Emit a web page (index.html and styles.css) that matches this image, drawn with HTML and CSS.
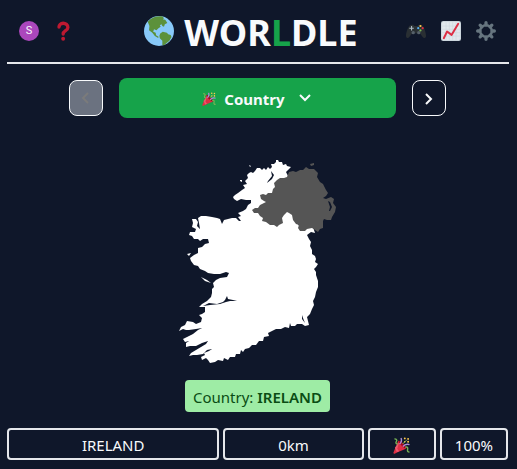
FILE: index.html
```
<!DOCTYPE html>
<html lang="en">
<head>
<meta charset="utf-8">
<meta name="viewport" content="width=device-width, initial-scale=1">
<title>Worldle</title>
<link rel="stylesheet" href="styles.css">
</head>
<body>
<svg class="defs" aria-hidden="true">
  <symbol id="party" viewBox="0 0 36 36">
    <path fill="#dd2e44" d="M11.6 7.6C9 14 4 25 1 33c-.7 2 .8 3 2.500 2.300C11 32 21 27.500 28.500 24.500z"/>
    <path fill="#ea596e" d="M13 11 9 25l4 5-5 2-4-9z"/>
    <ellipse cx="20" cy="16" rx="3" ry="11" transform="rotate(-45 20 16)" fill="#a0041e"/>
    <path d="M14 15c4-4 5-8 3-13M21 20c4-5 8-6 14-4" fill="none" stroke="#aa8dd8" stroke-width="3"/>
    <path d="M3 4c5 0 6 3 4 6s0 5 3 5M26 22c4-2 6 0 5 4s0 6 4 6" fill="none" stroke="#77b255" stroke-width="3"/>
    <path d="M20 14c6-1 4-6 9-7" fill="none" stroke="#77b255" stroke-width="2"/>
    <g fill="#ffcc4d"><circle cx="25" cy="3" r="2"/><circle cx="32" cy="4" r="2"/><circle cx="32" cy="10" r="2"/><circle cx="25" cy="10" r="1.500"/></g>
  </symbol>
</svg>
<div class="page">
  <header class="header">
    <nav class="side">
      <button class="icon-button avatar" aria-label="Account">S</button>
      <button class="icon-button" aria-label="Help">
        <svg class="icon" viewBox="0 0 36 36"><path d="M9 11C9 7 12 4 16.500 4S25 7 25 11.500c0 6-8.500 6-8.500 12" fill="none" stroke="#be1931" stroke-width="6" stroke-linecap="round"/><circle cx="16.500" cy="32" r="3.500" fill="#be1931"/></svg>
      </button>
    </nav>
    <h1 class="title">
      <svg class="globe" viewBox="0 0 36 36" aria-hidden="true"><circle cx="18" cy="18" r="18" fill="#88c9f9"/><path fill="#5c913b" d="M4.500 7C9 1.500 17-.5 22.500.8l1.500 2-1.500 1 3 .7 2.500 4-3 1.500-1 3-2-1-1-2-2 1 1 2-3 2-2 2-3-1-1 3 3 1 .5 3 3 2-.5 1.500-4-2.500-3-4-4-3L6.500 12z"/><path fill="#5c913b" d="m19.500 21 3-2 5 1 1.500 2 3 .7 1 2.500-2.500 4.500-3 2.500-3.500 3-2-.5 0-5-3-3-.5-3z"/></svg>
      <span class="wordmark">WOR<span class="accent">L</span>DLE</span>
    </h1>
    <nav class="side">
      <button class="icon-button" aria-label="Games">
        <svg class="icon" viewBox="0 0 36 36"><path fill="#292f33" d="M7 8c3-2 7-1 8 1h6c1-2 5-3 8-1 4 3 7 13 7 19 0 4-4 5-6 2l-5-7H11l-5 7c-2 3-6 2-6-2C0 21 3 11 7 8z"/><g fill="#55606a"><circle cx="13" cy="21" r="3"/><circle cx="23" cy="21" r="3"/></g><path stroke="#aab8c2" stroke-width="2" d="M10 9v8M6 13h8"/><circle cx="26" cy="9" r="2" fill="#ffcc4d"/><circle cx="30" cy="13" r="2" fill="#dd2e44"/><circle cx="26" cy="17" r="2" fill="#77b255"/><circle cx="22" cy="13" r="2" fill="#55acee"/></svg>
      </button>
      <button class="icon-button" aria-label="Statistics">
        <svg class="icon" viewBox="0 0 36 36"><rect width="36" height="36" rx="4" fill="#ccd6dd"/><rect x="2" y="2" width="32" height="32" rx="2" fill="#e1e8ed"/><path d="M9 2v32M15 2v32M21 2v32M27 2v32M2 9h32M2 15h32M2 21h32M2 27h32" stroke="#ccd6dd" stroke-width="1"/><path d="m5 31 6-12 8 6L31 5" fill="none" stroke="#dd2e44" stroke-width="3.500" stroke-linecap="round" stroke-linejoin="round"/></svg>
      </button>
      <button class="icon-button" aria-label="Settings">
        <svg class="icon" viewBox="0 0 36 36"><g stroke="#66757f" stroke-width="6" stroke-linecap="round"><path d="M18 3v4M18 29v4M3 18h4M29 18h4M7.500 7.500l3 3M25.500 25.500l3 3M7.500 28.500l3-3M25.500 10.500l3-3"/></g><circle cx="18" cy="18" r="10.500" fill="none" stroke="#66757f" stroke-width="4.500"/></svg>
      </button>
    </nav>
  </header>

  <main class="main">
    <div class="rounds">
      <button class="step" disabled aria-label="Previous round"><svg class="chevron" viewBox="0 0 16 16"><path d="M10 3 5 8l5 5"/></svg></button>
      <button class="current"><svg class="party" aria-hidden="true"><use href="#party"/></svg><span>Country</span><svg class="chevron down" viewBox="0 0 16 16" aria-hidden="true"><path d="m3 4 5 5 5-5"/></svg></button>
      <button class="step" aria-label="Next round"><svg class="chevron" viewBox="0 0 16 16"><path d="m5 4 5 5-5 5"/></svg></button>
    </div>

    <svg class="map" viewBox="178 158 162 208" role="img" aria-label="Map of Ireland">
      <path fill="#fff" d="M250 173L252 172 254 173 256 171 258 168 261 168 263 170 265 168 267 170 269 167 271 169 273 167 272 164 275 164 277 162 277 160 279 160 280 162 283 162 284 165 287 164 288 166 292 167 289 170 287 172 289 176 286 190 286 207 291 209 300 226 308 226 314 227 316 233 312 232 308 235 310 239 312 242 311 246 313 250 313 254 316 256 317 259 316 262 319 264 317 267 315 269 317 272 317 275 319 281 319 287 317 292 316 297 314 301 315 305 313 309 311 314 308 317 309 321 310 325 306 326 303 324 298 324 296 326 292 326 291 323 290 328 286 327 282 329 277 329 273 331 269 333 270 336 265 337 264 341 260 341 257 345 253 345 250 348 246 349 244 352 242 350 241 354 237 354 236 357 231 357 229 360 225 358 224 361 219 360 216 362 211 363 209 360 207 358 203 360 202 357 206 355 205 353 210 351 213 349 208 350 204 354 198 355 194 355 190 356 192 353 197 350 202 347 207 344 209 341 203 343 197 346 191 346 187 347 187 343 190 341 186 342 184 339 188 337 194 334 199 330 203 328 197 329 190 330 187 330 184 329 180 331 182 327 186 325 188 321 194 322 197 324 202 322 203 318 200 315 203 314 206 312 206 307 200 307 203 304 208 301 212 297 213 293 213 289 215 287 214 283 217 280 221 278 228 277 230 273 227 272 221 274 215 274 209 273 206 271 201 269 199 266 195 265 192 261 191 258 195 255 199 253 199 248 203 247 206 244 210 243 209 239 204 239 201 241 199 239 195 239 193 236 190 235 191 232 196 232 197 229 193 227 194 223 193 219 197 219 199 222 198 226 201 229 200 223 199 218 202 216 207 216 213 217 218 218 221 219 223 224 225 220 229 219 233 218 237 218 240 221 242 221 239 217 242 216 239 213 244 211 247 209 249 205 252 203 252 200 247 200 242 199 238 201 235 199 234 197 236 195 239 193 243 190 246 188 244 185 248 184 246 181 249 178 248 175z"/>
      <path fill="#555" d="M253 210L256 208 259 208 261 205 267 202 265 201 262 199 261 195 264 194 267 195 269 193 273 193 274 189 276 187 275 183 278 180 281 178 285 178 288 177 290 172 294 171 297 172 301 170 304 170 307 167 310 169 315 169 319 173 318 177 321 182 324 184 327 190 329 193 327 196 324 198 327 199 332 197 335 199 334 203 337 207 336 212 333 217 332 220 328 220 325 219 324 221 324 228 321 229 319 232 313 228 308 229 306 231 301 231 299 228 300 225 297 224 294 220 293 215 290 213 288 212 285 215 283 218 284 223 280 225 278 227 275 225 271 225 267 222 263 221 264 218 261 216 259 213 255 213z"/>
      <path fill="#0f172a" d="M329 201L331 202 333 207 331 211 330 211 331 207zM204 306L210 303 218 304 224 302 226 300 228 296 229 299 234 300 238 301 231 301 227 302 221 304 211 305zM269 181L273 176 272 171 275 175 273 179 268 183zM303 315L303 319 306 323 304 318z"/>
      <path fill="#fff" d="M202 277L208 280 212 283 206 281zM188 254L192 253 190 256zM241 180L243 180 243 182 241 181z"/>
      <path fill="#555" d="M311 164L315 163 315 165 312 166z"/>
      <path fill="#fff" d="M250 165L252 166 251 167z"/>
    </svg>

    <p class="answer">Country: <strong>IRELAND</strong></p>

    <div class="guess">
      <span class="cell name">IRELAND</span>
      <span class="cell distance">0km</span>
      <span class="cell"><svg class="party large" role="img" aria-label="Correct"><use href="#party"/></svg></span>
      <span class="cell">100%</span>
    </div>
  </main>
</div>
</body>
</html>
```
FILE: styles.css
```
* {
  box-sizing: border-box;
}

body {
  margin: 0;
  background: #0f172a;
  color: #f8fafc;
  font: 15px/24px "Noto Sans", "Open Sans", sans-serif;
}

button {
  padding: 0;
  border: 0;
  background: none;
  color: inherit;
  font: inherit;
}

.defs {
  display: none;
}

.page {
  padding: 0 8px 8px 7px;
}

.header {
  display: flex;
  align-items: center;
  justify-content: space-between;
  height: 64px;
  border-bottom: 2px solid #e5e7eb;
}

.side {
  display: flex;
  gap: 15px;
  padding: 0 12px;
}

.side:last-child {
  padding-right: 13px;
}

.icon-button {
  display: grid;
  place-items: center;
  width: 20px;
  height: 20px;
}

.icon {
  width: 20px;
  height: 20px;
}

.avatar {
  border-radius: 50%;
  background: #ab47bc;
  font: 11px/20px Roboto, sans-serif;
}

.title {
  display: flex;
  align-items: center;
  gap: 10px;
  margin: 0;
  padding-left: 22px;
  font-size: 36px;
  line-height: 40px;
  font-weight: 700;
}

.wordmark {
  padding-top: 4px;
}

.globe {
  width: 30px;
  height: 30px;
}

.accent {
  color: #16a34a;
}

.main {
  display: flex;
  flex-direction: column;
  align-items: center;
  padding-right: 1px;
}

.rounds {
  display: flex;
  align-items: center;
  justify-content: center;
  gap: 16px;
  width: 100%;
  padding: 14px 62px 0;
}

.step {
  display: grid;
  place-items: center;
  width: 34px;
  height: 36px;
  border: 1px solid #f8fafc;
  border-radius: 8px;
}

.step:disabled {
  background: #6b7280;
  color: #7b7b7b;
}

.current {
  display: flex;
  flex: 1;
  align-items: center;
  justify-content: center;
  height: 40px;
  padding-top: 2px;
  border-radius: 8px;
  background: #16a34a;
  font-weight: 700;
}

.chevron {
  width: 16px;
  height: 16px;
  fill: none;
  stroke: currentColor;
  stroke-width: 2;
}

.down {
  margin-left: 12px;
}

.party {
  width: 14px;
  height: 14px;
  margin-right: 8px;
}

.party.large {
  width: 17px;
  height: 17px;
  margin: 0;
}

.map {
  width: 162px;
  height: 208px;
  margin-top: 40px;
}

.answer {
  margin: 14px 0 16px;
  padding: 5px 8px 3px;
  border-radius: 4px;
  background: #9eeca5;
  color: #0a4d14;
}

.answer strong {
  font-weight: 600;
}

.guess {
  display: grid;
  grid-template-columns: repeat(7, 1fr);
  gap: 4px;
  width: 100%;
}

.cell {
  display: flex;
  align-items: center;
  justify-content: center;
  height: 32px;
  padding-top: 2px;
  border: 2px solid #e5e7eb;
  border-radius: 4px;
}

.name {
  grid-column: span 3;
}

.distance {
  grid-column: span 2;
}
```
